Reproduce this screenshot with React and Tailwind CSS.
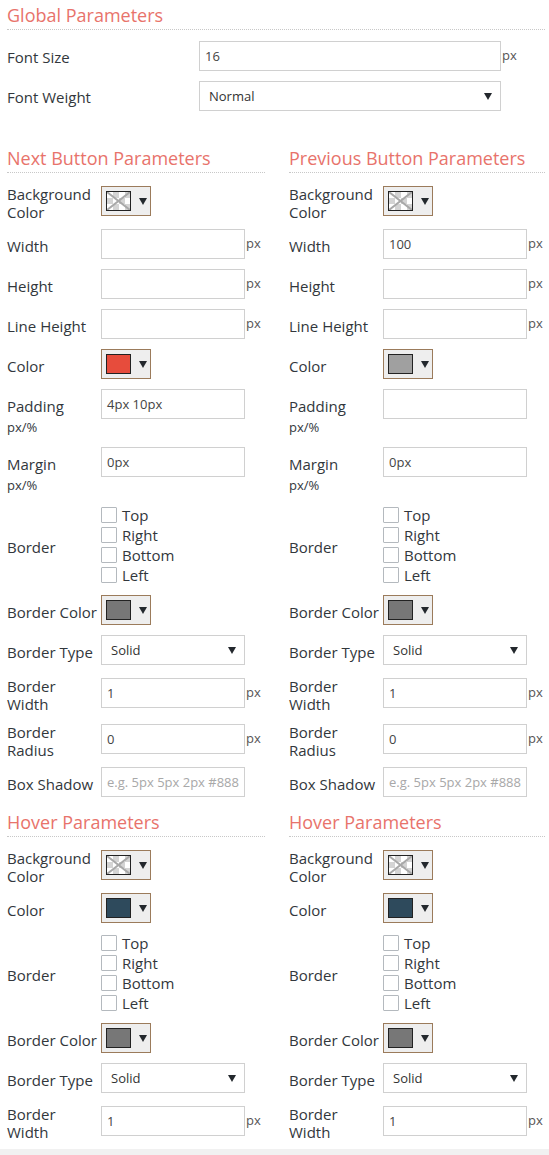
const SWATCH_NONE = 'none';

function Swatch({ color }) {
  if (color === SWATCH_NONE) {
    return (
      <div className="w-[25px] h-[20px] border border-[#222] bg-white overflow-hidden">
        <svg width="23" height="18" viewBox="0 0 23 18">
          <rect x="6" y="0" width="6" height="6" fill="#d4d4d4" />
          <rect x="18" y="0" width="6" height="6" fill="#d4d4d4" />
          <rect x="0" y="6" width="6" height="6" fill="#d4d4d4" />
          <rect x="12" y="6" width="6" height="6" fill="#d4d4d4" />
          <rect x="6" y="12" width="6" height="6" fill="#d4d4d4" />
          <rect x="18" y="12" width="6" height="6" fill="#d4d4d4" />
          <line x1="0" y1="0" x2="23" y2="18" stroke="#a8a8a8" strokeWidth="2" />
          <line x1="23" y1="0" x2="0" y2="18" stroke="#a8a8a8" strokeWidth="2" />
        </svg>
      </div>
    );
  }
  return <div className="w-[25px] h-[20px] border border-[#222]" style={{ backgroundColor: color }} />;
}

function Caret() {
  return (
    <svg width="8" height="7" viewBox="0 0 8 7" className="shrink-0">
      <polygon points="0,0 8,0 4,7" fill="#23282d" />
    </svg>
  );
}

function ColorPicker({ color }) {
  return (
    <div className="w-[50px] h-[30px] border border-[#9b7b5b] bg-[#eeeeee] flex items-center pl-[4px] gap-[8px]">
      <Swatch color={color} />
      <Caret />
    </div>
  );
}

function TextInput({ value, placeholder, unit, width = 'w-[144px]' }) {
  return (
    <div className="flex items-center">
      <div className={`${width} h-[30px] border border-[#d0d0d0] bg-white pl-[5px] pt-[2px] flex items-center text-[13px] text-[#444] whitespace-nowrap overflow-hidden`}>
        {value ? value : <span className="text-[#a8a8a8]">{placeholder}</span>}
      </div>
      {unit && <span className="ml-[1px] text-[13px] text-[#555]">px</span>}
    </div>
  );
}

function Select({ value, width = 'w-[144px]' }) {
  return (
    <div className={`${width} h-[30px] border border-[#d0d0d0] bg-white pl-[9px] pr-[8px] flex items-center justify-between text-[13px] text-[#333]`}>
      <span className="pt-[2px]">{value}</span>
      <Caret />
    </div>
  );
}

function Checks() {
  return (
    <div className="flex flex-col">
      {['Top', 'Right', 'Bottom', 'Left'].map(s => (
        <div key={s} className="h-[20px] flex items-center gap-[5px]">
          <div className="w-[16px] h-[16px] border border-[#b4b9be] rounded-[1px] bg-white" />
          <span className="leading-[18px]">{s}</span>
        </div>
      ))}
    </div>
  );
}

function Label({ lines }) {
  // text sits a little below the control's centre line
  return (
    <div className="w-[94px] shrink-0 leading-[18px] pt-[2px] -mb-[2px]">
      {lines.map(l => (
        <div key={l} className="whitespace-nowrap">{l}</div>
      ))}
    </div>
  );
}

function Row({ label, children }) {
  return (
    <div className="flex items-center mb-[10px]">
      <Label lines={label} />
      {children}
    </div>
  );
}

function UnitRow({ label, value }) {
  // label with a small "px/%" note under it
  return (
    <div className="flex items-start mb-[12px]">
      <div className="w-[94px] shrink-0 pt-[7px]">
        <div className="leading-[20px]">{label}</div>
        <div className="mt-[3px] text-[13px] leading-[16px]">px/%</div>
      </div>
      <TextInput value={value} />
    </div>
  );
}

function Heading({ children, className = '' }) {
  return (
    <h2 className={`text-[18px] leading-[24px] text-[#e8736b] pb-[2px] border-b border-dotted border-[#c8c8c8] mb-[10px] ${className}`}>
      {children}
    </h2>
  );
}

function ButtonColumn({ title, color, width, padding }) {
  return (
    <div>
      <Heading>{title}</Heading>
      <Row label={['Background', 'Color']}><ColorPicker color={SWATCH_NONE} /></Row>
      <Row label={['Width']}><TextInput value={width} unit /></Row>
      <Row label={['Height']}><TextInput unit /></Row>
      <Row label={['Line Height']}><TextInput unit /></Row>
      <Row label={['Color']}><ColorPicker color={color} /></Row>
      <UnitRow label="Padding" value={padding} />
      <UnitRow label="Margin" value="0px" />
      <Row label={['Border']}><Checks /></Row>
      <Row label={['Border Color']}><ColorPicker color="#777777" /></Row>
      <Row label={['Border Type']}><Select value="Solid" /></Row>
      <Row label={['Border', 'Width']}><TextInput value="1" unit /></Row>
      <Row label={['Border', 'Radius']}><TextInput value="0" unit /></Row>
      <Row label={['Box Shadow']}><TextInput placeholder="e.g. 5px 5px 2px #888" /></Row>

      <Heading className="mt-[13px]">Hover Parameters</Heading>
      <Row label={['Background', 'Color']}><ColorPicker color={SWATCH_NONE} /></Row>
      <Row label={['Color']}><ColorPicker color="#2e4a5c" /></Row>
      <Row label={['Border']}><Checks /></Row>
      <Row label={['Border Color']}><ColorPicker color="#777777" /></Row>
      <Row label={['Border Type']}><Select value="Solid" /></Row>
      <Row label={['Border', 'Width']}><TextInput value="1" unit /></Row>
    </div>
  );
}

export default function App() {
  return (
    <div className="w-[549px] min-h-[1155px] bg-[#f1f1f1] font-['Open_Sans',sans-serif] text-[15px] text-[#32373c]">
      <div className="h-[1149px] bg-white pl-[7px] pr-[4px] pt-[3px] overflow-hidden">
        {/* Global */}
        <Heading>Global Parameters</Heading>
        <div className="flex items-center mb-[10px] mt-[11px]">
          <div className="w-[192px] shrink-0 pt-[2px]">Font Size</div>
          <TextInput value="16" unit width="w-[302px]" />
        </div>
        <div className="flex items-center">
          <div className="w-[192px] shrink-0 pt-[2px]">Font Weight</div>
          <Select value="Normal" width="w-[302px]" />
        </div>

        <div className="grid grid-cols-[258px_256px] gap-x-[24px] mt-[35px]">
          <ButtonColumn title="Next Button Parameters" color="#e74c3c" width="" padding="4px 10px" />
          <ButtonColumn title="Previous Button Parameters" color="#a0a0a0" width="100" padding="" />
        </div>
      </div>
    </div>
  );
}
